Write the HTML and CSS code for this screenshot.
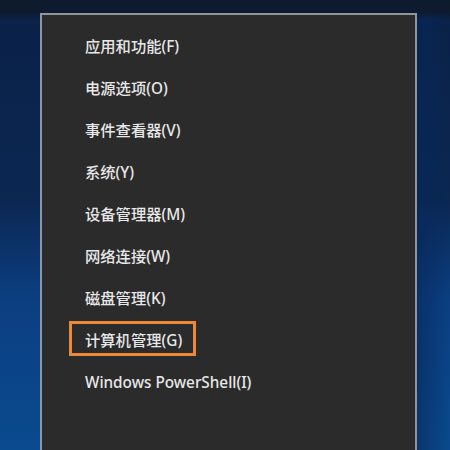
FILE: index.html
```html
<!DOCTYPE html>
<html lang="zh-CN">
<head>
<meta charset="utf-8">
<title>Win+X 菜单</title>
<link rel="stylesheet" href="styles.css">
</head>
<body>
<div class="desktop">
  <div class="menu">
    <ul class="items">
      <li class="item"><span class="label">应用和功能(F)</span></li>
      <li class="item"><span class="label">电源选项(O)</span></li>
      <li class="item"><span class="label">事件查看器(V)</span></li>
      <li class="item"><span class="label">系统(Y)</span></li>
      <li class="item"><span class="label">设备管理器(M)</span></li>
      <li class="item"><span class="label">网络连接(W)</span></li>
      <li class="item"><span class="label">磁盘管理(K)</span></li>
      <li class="item"><span class="label label-hl">计算机管理(G)</span></li>
      <li class="item"><span class="label">Windows PowerShell(I)</span></li>
    </ul>
  </div>
</div>
</body>
</html>
```

FILE: styles.css
```css
html, body {
  margin: 0;
  padding: 0;
  width: 450px;
  height: 450px;
  overflow: hidden;
}

.desktop {
  width: 450px;
  height: 450px;
  box-sizing: border-box;
  padding: 13px 0 0 40px;
  background:
    linear-gradient(180deg, #0e1a2e 0px, #0e1a2e 11px, rgba(14,26,46,0) 20px),
    linear-gradient(90deg, rgba(10,32,70,0) 0px, rgba(10,32,70,0) 417px, rgba(6,40,90,0.6) 417px, rgba(6,40,90,0) 450px),
    linear-gradient(180deg, #0a2147 0px, #0b2752 200px, #0b3f82 300px, #0a4a8e 450px);
}

.menu {
  width: 377px;
  height: 437px;
  box-sizing: border-box;
  background: #2b2b2b;
  border: 2px solid #8e959d;
  border-bottom: none;
  padding-top: 10px;
  font-family: "Noto Sans", "Noto Sans CJK SC", sans-serif;
  font-size: 15.3px;
  color: #e8e8e8;
}

.items {
  list-style: none;
  margin: 0;
  padding: 0;
}

.item {
  height: 42px;
  display: flex;
  align-items: center;
  padding-left: 27px;
}

.label {
  display: inline-block;
  line-height: 20px;
  padding: 0 11px 0 13px;
  border: 3px solid transparent;
  font-weight: 500;
}

.label-hl {
  border-color: #ec8838;
  padding-top: 6px;
  padding-bottom: 3px;
  margin-top: -3px;
}
```
